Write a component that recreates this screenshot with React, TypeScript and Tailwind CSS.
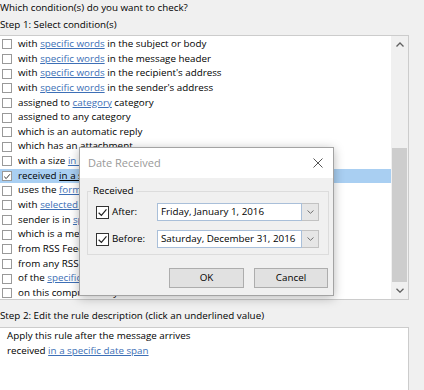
import React from "react";

type Row = { pre: string; link?: string; post?: string; checked?: boolean };

const rows: Row[] = [
  { pre: "with ", link: "specific words", post: " in the subject or body" },
  { pre: "with ", link: "specific words", post: " in the message header" },
  { pre: "with ", link: "specific words", post: " in the recipient's address" },
  { pre: "with ", link: "specific words", post: " in the sender's address" },
  { pre: "assigned to ", link: "category", post: " category" },
  { pre: "assigned to any category" },
  { pre: "which is an automatic reply" },
  { pre: "which has an attachment" },
  { pre: "with a size ", link: "in a specific range" },
  { pre: "received ", link: "in a specific date span", checked: true },
  { pre: "uses the ", link: "form name", post: " form" },
  { pre: "with ", link: "selected properties", post: " of documents or forms" },
  { pre: "sender is in ", link: "specified", post: " Address Book" },
  { pre: "which is a meeting invitation or update" },
  { pre: "from RSS Feeds with ", link: "specified text", post: " in the title" },
  { pre: "from any RSS Feed" },
  { pre: "of the ", link: "specific form", post: " type" },
  { pre: "on this computer only" },
];

function Check({ size, color }: { size: number; color: string }) {
  return (
    <svg width={size} height={size} viewBox="0 0 10 10" fill="none">
      <path d="M1.5 5.2 L4 7.6 L8.6 2.2" stroke={color} strokeWidth="1.1" />
    </svg>
  );
}

function Chevron({ up }: { up?: boolean }) {
  return (
    <svg width="8" height="5" viewBox="0 0 8 5" fill="none">
      <path
        d={up ? "M0.5 4.5 L4 1 L7.5 4.5" : "M0.5 0.8 L4 4.2 L7.5 0.8"}
        stroke="#606060"
        strokeWidth="1.3"
      />
    </svg>
  );
}

function DateRow({ label, value, mt }: { label: string; value: string; mt: string }) {
  return (
    <div className={`flex items-center h-[18px] ml-[5px] ${mt}`}>
      <div className="w-[13px] h-[13px] border border-[#333333] bg-white flex items-center justify-center">
        <Check size={11} color="#222222" />
      </div>
      <span className="ml-[3px] w-[45px]">{label}</span>
      <div className="w-[145px] h-[18px] border border-[#a9bfd9] bg-white pl-[3px] leading-[16px] whitespace-nowrap overflow-hidden">
        {value}
      </div>
      <div className="w-[17px] h-[18px] border border-l-0 border-[#c2c2c2] bg-[#e6e6e6] flex items-center justify-center">
        <svg width="7" height="4" viewBox="0 0 7 4" fill="none">
          <path d="M0.5 0.5 L3.5 3.3 L6.5 0.5" stroke="#707070" strokeWidth="1" />
        </svg>
      </div>
    </div>
  );
}

export default function App() {
  return (
    <div className="relative w-[424px] h-[390px] overflow-hidden bg-[#f0f0f0] text-[9.8px] text-black font-['Open_Sans',sans-serif]">
      <p className="h-4 leading-4 whitespace-nowrap">Which condition(s) do you want to check?</p>
      <p className="mt-px h-4 leading-4 whitespace-nowrap">Step 1: Select condition(s)</p>

      {/* condition list */}
      <div className="mt-[2px] w-[409px] h-[265px] flex border-t border-r border-b border-[#cccccc]">
        <div className="flex-1 bg-white pt-px overflow-hidden">
          {rows.map((r, i) => (
            <div
              key={i}
              className={`flex items-center h-[14.65px] leading-[14.65px] whitespace-nowrap ${
                r.checked ? "bg-[#a9cff2]" : ""
              }`}
            >
              <div className="ml-[2px] w-[10px] h-[10px] border border-[#999999] bg-white flex items-center justify-center shrink-0">
                {r.checked && <Check size={9} color="#1a1a1a" />}
              </div>
              <span className="ml-[6px]">
                {r.pre}
                {r.link && (
                  <span className={`underline ${r.checked ? "text-black" : "text-[#3d6fb6]"}`}>
                    {r.link}
                  </span>
                )}
                {r.post}
              </span>
            </div>
          ))}
        </div>
        {/* scrollbar */}
        <div className="w-[17px] bg-[#f0f0f0] flex flex-col">
          <div className="h-[17px] flex items-center justify-center">
            <Chevron up />
          </div>
          <div className="flex-1 flex flex-col justify-end">
            <div className="h-[134px] mx-px bg-[#cdcdcd]" />
          </div>
          <div className="h-[17px] flex items-center justify-center">
            <Chevron />
          </div>
        </div>
      </div>

      <p className="mt-2 h-4 leading-4 whitespace-nowrap">
        Step 2: Edit the rule description (click an underlined value)
      </p>
      <div className="mt-[3px] w-[409px] h-[80px] border-t border-r border-[#cccccc] bg-white pl-[7px] pt-px leading-[14.5px]">
        <p>Apply this rule after the message arrives</p>
        <p>
          received <span className="underline text-[#3d6fb6]">in a specific date span</span>
        </p>
      </div>

      {/* Date Received dialog */}
      <div className="absolute left-[79px] top-[147px] w-[255px] h-[149px] border border-[#a3a3a3] bg-[#f0f0f0] shadow-[0_2px_10px_rgba(0,0,0,0.28)] overflow-hidden">
        <div className="h-[30px] bg-white flex items-center justify-between pl-2">
          <span className="text-[#999999] text-[11px]">Date Received</span>
          <svg className="mr-[10px]" width="10" height="10" viewBox="0 0 10 10" fill="none">
            <path d="M0.5 0.5 L9.5 9.5 M9.5 0.5 L0.5 9.5" stroke="#555555" strokeWidth="1" />
          </svg>
        </div>
        <div className="pl-[7px] pr-[4px] pt-[5px]">
          <fieldset className="border border-[#dcdcdc] pl-[3px] pb-[6px]">
            <legend className="px-[2px] leading-4">Received</legend>
            <DateRow label="After:" value="Friday, January 1, 2016" mt="mt-[4px]" />
            <DateRow label="Before:" value="Saturday, December 31, 2016" mt="mt-[9px]" />
          </fieldset>
          <div className="mt-[13px] pr-px flex justify-end gap-[10px]">
            <button className="w-[75px] h-[20px] bg-[#e1e1e1] border border-[#adadad] leading-[18px]">
              OK
            </button>
            <button className="w-[74px] h-[20px] bg-[#e1e1e1] border border-[#adadad] leading-[18px]">
              Cancel
            </button>
          </div>
        </div>
      </div>
    </div>
  );
}
